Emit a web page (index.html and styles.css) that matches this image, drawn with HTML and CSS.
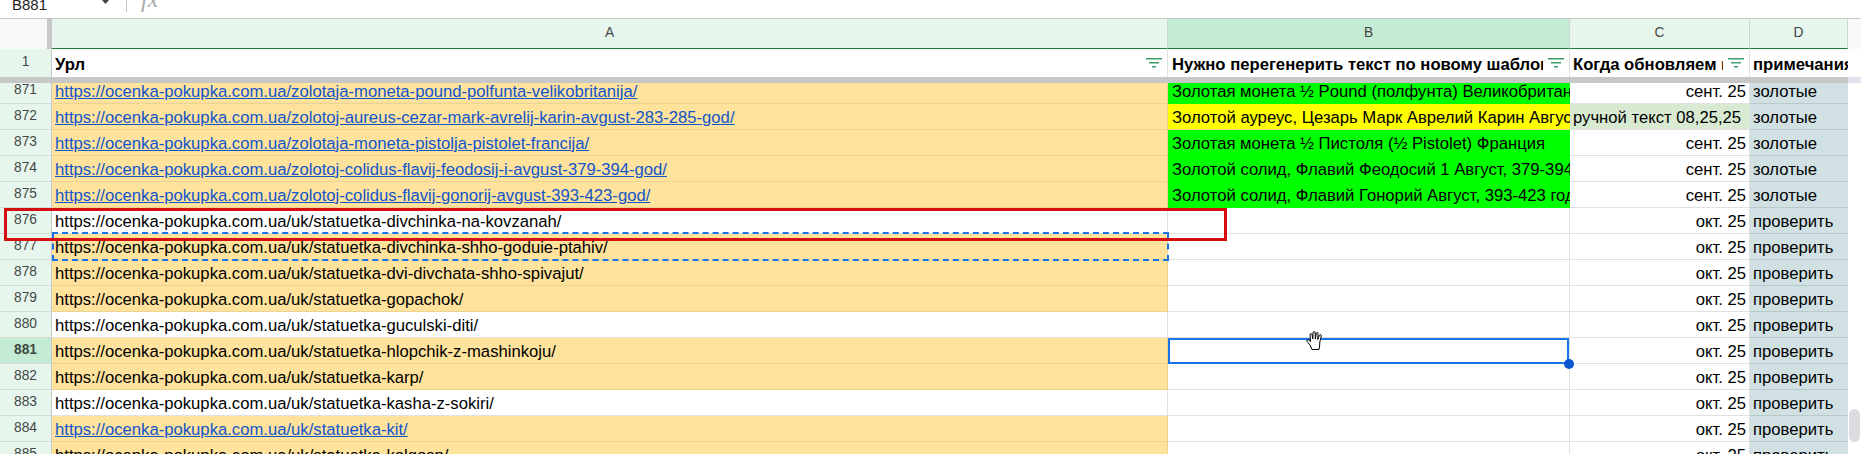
FILE: index.html
```html
<!DOCTYPE html>
<html lang="ru">
<head>
<meta charset="utf-8">
<title>Sheet</title>
<link rel="stylesheet" href="styles.css">
</head>
<body>
<div class="app">
  <div class="formula">
    <span class="namebox">B881</span>
    <svg class="caret" width="7" height="4" viewBox="0 0 9 5"><path d="M0 0h9L4.500 5z"/></svg>
    <span class="sep"></span>
    <span class="fx">fx</span>
  </div>
  <div class="colhead grid">
    <div class="corner"></div>
    <div class="ch">A</div>
    <div class="ch sel">B</div>
    <div class="ch">C</div>
    <div class="ch">D</div>
    <div class="sidefill"></div>
  </div>
  <div class="frozen grid">
    <div class="rh first">1</div>
    <div class="hc"><span class="ht">Урл</span><svg class="flt" width="16" height="10" viewBox="0 0 16 10"><path d="M0 0h16v1.500H0zM3 4h10v1.500H3zM6 8h4v1.500H6z"/></svg></div>
    <div class="hc"><span class="ht">Нужно перегенерить текст по новому шаблону</span><svg class="flt" width="16" height="10" viewBox="0 0 16 10"><path d="M0 0h16v1.500H0zM3 4h10v1.500H3zM6 8h4v1.500H6z"/></svg></div>
    <div class="hc"><span class="ht">Когда обновляем по</span><svg class="flt" width="16" height="10" viewBox="0 0 16 10"><path d="M0 0h16v1.500H0zM3 4h10v1.500H3zM6 8h4v1.500H6z"/></svg></div>
    <div class="hc"><span class="ht">примечания</span></div>
    <div class="sidefill white"></div>
  </div>
  <div class="divider"><span class="divider-main"></span><span class="divider-side"></span></div>
  <div class="pane">
    <div class="rows">
      <div class="row grid first-row"><div class="rh">871</div><div class="c o"><a href="#">https://ocenka-pokupka.com.ua/zolotaja-moneta-pound-polfunta-velikobritanija/</a></div><div class="c gr">Золотая монета ½ Pound (полфунта) Великобритания</div><div class="c r">сент. 25</div><div class="c d">золотые</div></div>
      <div class="row grid"><div class="rh">872</div><div class="c o"><a href="#">https://ocenka-pokupka.com.ua/zolotoj-aureus-cezar-mark-avrelij-karin-avgust-283-285-god/</a></div><div class="c ye">Золотой ауреус, Цезарь Марк Аврелий Карин Август</div><div class="c lg">ручной текст 08,25,25</div><div class="c d">золотые</div></div>
      <div class="row grid"><div class="rh">873</div><div class="c o"><a href="#">https://ocenka-pokupka.com.ua/zolotaja-moneta-pistolja-pistolet-francija/</a></div><div class="c gr">Золотая монета ½ Пистоля (½ Pistolet) Франция</div><div class="c r">сент. 25</div><div class="c d">золотые</div></div>
      <div class="row grid"><div class="rh">874</div><div class="c o"><a href="#">https://ocenka-pokupka.com.ua/zolotoj-colidus-flavij-feodosij-i-avgust-379-394-god/</a></div><div class="c gr">Золотой солид, Флавий Феодосий 1 Август, 379-394 год</div><div class="c r">сент. 25</div><div class="c d">золотые</div></div>
      <div class="row grid"><div class="rh">875</div><div class="c o"><a href="#">https://ocenka-pokupka.com.ua/zolotoj-colidus-flavij-gonorij-avgust-393-423-god/</a></div><div class="c gr">Золотой солид, Флавий Гонорий Август, 393-423 год</div><div class="c r">сент. 25</div><div class="c d">золотые</div></div>
      <div class="row grid"><div class="rh">876</div><div class="c">https://ocenka-pokupka.com.ua/uk/statuetka-divchinka-na-kovzanah/</div><div class="c"></div><div class="c r">окт. 25</div><div class="c d">проверить</div></div>
      <div class="row grid"><div class="rh">877</div><div class="c o">https://ocenka-pokupka.com.ua/uk/statuetka-divchinka-shho-goduie-ptahiv/</div><div class="c"></div><div class="c r">окт. 25</div><div class="c d">проверить</div></div>
      <div class="row grid"><div class="rh">878</div><div class="c o">https://ocenka-pokupka.com.ua/uk/statuetka-dvi-divchata-shho-spivajut/</div><div class="c"></div><div class="c r">окт. 25</div><div class="c d">проверить</div></div>
      <div class="row grid"><div class="rh">879</div><div class="c o">https://ocenka-pokupka.com.ua/uk/statuetka-gopachok/</div><div class="c"></div><div class="c r">окт. 25</div><div class="c d">проверить</div></div>
      <div class="row grid"><div class="rh">880</div><div class="c">https://ocenka-pokupka.com.ua/uk/statuetka-guculski-diti/</div><div class="c"></div><div class="c r">окт. 25</div><div class="c d">проверить</div></div>
      <div class="row grid"><div class="rh selrow">881</div><div class="c o">https://ocenka-pokupka.com.ua/uk/statuetka-hlopchik-z-mashinkoju/</div><div class="c"></div><div class="c r">окт. 25</div><div class="c d">проверить</div></div>
      <div class="row grid"><div class="rh">882</div><div class="c o">https://ocenka-pokupka.com.ua/uk/statuetka-karp/</div><div class="c"></div><div class="c r">окт. 25</div><div class="c d">проверить</div></div>
      <div class="row grid"><div class="rh">883</div><div class="c">https://ocenka-pokupka.com.ua/uk/statuetka-kasha-z-sokiri/</div><div class="c"></div><div class="c r">окт. 25</div><div class="c d">проверить</div></div>
      <div class="row grid"><div class="rh">884</div><div class="c o"><a href="#">https://ocenka-pokupka.com.ua/uk/statuetka-kit/</a></div><div class="c"></div><div class="c r">окт. 25</div><div class="c d">проверить</div></div>
      <div class="row grid"><div class="rh">885</div><div class="c o">https://ocenka-pokupka.com.ua/uk/statuetka-kolgosp/</div><div class="c"></div><div class="c r">окт. 25</div><div class="c d">проверить</div></div>
    </div>
    <div class="thumb"></div>
  </div>
  <div class="ants"></div>
  <div class="selbox"></div>
  <div class="handle"></div>
  <div class="redbox"></div>
  <svg class="hand" width="18" height="19" viewBox="0 0 18 19"><path d="M6 18.500 L4 14 L1 10.500 C0.300 9.500 1.500 8.300 2.600 9 L4.500 10.500 L4 3.500 C4 2.300 5.800 2.300 6 3.500 L6.800 8 L7 1.700 C7 0.300 9 0.300 9.100 1.700 L9.400 8 L10.300 2.200 C10.500 1 12.200 1.200 12.100 2.500 L11.700 8.500 L13.500 4.200 C14 3 15.700 3.600 15.300 4.900 L13.800 11 L13.600 15 L13 18.500 Z" fill="#fff" stroke="#000" stroke-width="1"/></svg>
</div>
</body>
</html>
```
FILE: styles.css
```css
* { box-sizing: border-box; }
html, body { margin: 0; padding: 0; background: #fff; }
.app {
  position: relative;
  width: 1861px;
  height: 454px;
  overflow: hidden;
  font-family: "Liberation Sans", Arial, sans-serif;
  font-size: 16.67px;
  color: #000;
}
.grid {
  display: grid;
  grid-template-columns: 52px 1116px 402px 180px 98px 13px;
}
.formula {
  height: 19px;
  border-bottom: 1px solid #c7c7c7;
  display: flex;
  align-items: flex-end;
  overflow: hidden;
}
.namebox {
  margin-left: 12px;
  width: 90px;
  height: 18px;
  line-height: 9px;
  font-size: 15px;
  color: #222;
  overflow: hidden;
}
.caret { align-self: flex-start; fill: #444; }
.sep {
  align-self: flex-start;
  margin-left: 17px;
  width: 1px;
  height: 12px;
  background: #c7c7c7;
}
.fx {
  align-self: flex-start;
  margin-left: 14px;
  margin-top: -14px;
  font-family: "Liberation Serif", serif;
  font-style: italic;
  font-size: 24px;
  color: #aaa;
}
.colhead { height: 30px; }
.corner {
  background: #f8f9fa;
  border-right: 5px solid #c7c7c7;
}
.ch {
  background: #e6f6ec;
  border-right: 1px solid #c7d9cf;
  border-bottom: 1px solid #188038;
  text-align: center;
  font-size: 13.750px;
  line-height: 28px;
  color: #444746;
}
.ch.sel { background: #c4ebd3; }
.sidefill { background: #f8f9fa; }
.sidefill.white { background: #fff; }
.frozen { height: 28px; }
.rh {
  background: #e6f6ec;
  border-right: 1px solid #c7c7c7;
  border-bottom: 1px solid #d4dcd8;
  text-align: center;
  font-size: 13.750px;
  color: #444746;
  line-height: 24px;
}
.rh.first { line-height: 25px; border-bottom: 0; }
.rh.selrow { background: #c4ebd3; font-weight: 700; color: #3c4a42; }
.hc {
  display: flex;
  align-items: center;
  padding: 4px 5px 0 3px;
  background: #fff;
  border-right: 1px solid #e1e1e1;
  min-width: 0;
  font-weight: 700;
}
.hc:nth-child(3) { padding-left: 4px; }
.hc:nth-child(5) { padding-right: 0; border-right: 0; }
.ht {
  flex: 1;
  min-width: 0;
  white-space: nowrap;
  overflow: hidden;
}
.flt { flex: none; margin: -4px 0 0 5px; fill: #3f9e68; }
.divider { display: flex; height: 6px; }
.divider-main { width: 1848px; background: #c7c7c7; }
.divider-side { flex: 1; background: #dfe3ec; }
.pane {
  position: relative;
  height: 371px;
  overflow: hidden;
}
.rows { margin-top: -5px; }
.row { height: 26px; line-height: 24px; }
.c {
  overflow: hidden;
  white-space: nowrap;
  padding: 2px 3px 0;
  border-right: 1px solid #e1e1e1;
  border-bottom: 1px solid #e1e1e1;
  background: #fff;
  min-width: 0;
}
.c:nth-child(3) { padding-left: 4px; padding-right: 0; }
.c.o { background: #ffe29b; border-right-color: #ecd293; border-bottom-color: #ecd293; }
.c.gr { background: #00ff00; border: 0; }
.c.ye { background: #ffff00; border-bottom: 1px solid #e8d98a; border-right: 0; }
.c.r { text-align: right; }
.c.lg { background: #d9ead3; }
.c.d { background: #d0e0e3; border-right: 0; border-bottom-color: #b8c9cc; }
.c a { color: #1155cc; text-decoration: underline; }
.thumb {
  position: absolute;
  right: 1px;
  top: 326px;
  width: 11px;
  height: 33px;
  background: #dadce0;
  border-radius: 6px;
}
.ants {
  position: absolute;
  left: 52px;
  top: 232px;
  width: 1117px;
  height: 29px;
  border: 2px dashed #1a73e8;
}
.selbox {
  position: absolute;
  left: 1168px;
  top: 338px;
  width: 401px;
  height: 26px;
  border: 2px solid #1a73e8;
}
.handle {
  position: absolute;
  left: 1564px;
  top: 359px;
  width: 10px;
  height: 10px;
  background: #0b57d0;
  border-radius: 50%;
}
.redbox {
  position: absolute;
  left: 4px;
  top: 208px;
  width: 1223px;
  height: 33px;
  border: 3px solid #d40f0f;
}
.hand { position: absolute; left: 1306px; top: 331px; }
```
